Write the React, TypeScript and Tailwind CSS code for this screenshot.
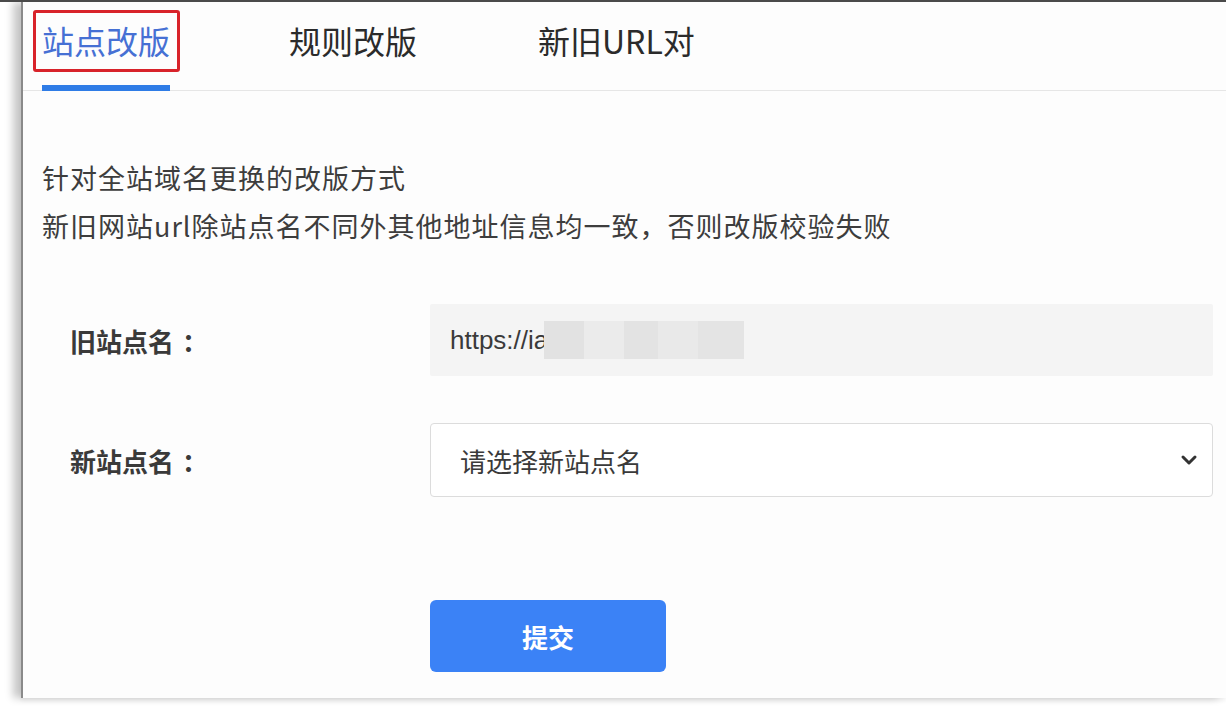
const App = () => (
  <div
    className="w-[1226px] h-[706px] bg-white overflow-hidden border-t-2 border-[#4a4a4a]"
    style={{ fontFamily: '"Noto Sans CJK SC", "Noto Sans", sans-serif' }}
  >
    <div className="ml-[21px] h-[696px] bg-[#fdfdfd] border-l-2 border-[#8a8a8a] shadow-[-8px_0_8px_rgba(0,0,0,0.22),0_3px_4px_rgba(0,0,0,0.05)]">
      {/* Tabs */}
      <div className="flex h-[89px] border-b border-[#e6e6e6] pl-[19px]">
        <div className="relative flex flex-col w-[128px]">
          <div className="absolute left-[-9px] top-[8px] w-[147px] h-[62px] border-[3px] border-[#d8232a] rounded-[3px]" />
          <span className="pt-[18px] text-[32px] leading-[40px] text-[#4670d4] whitespace-nowrap">站点改版</span>
          <div className="mt-auto h-[6px] bg-[#2f7ce6] -mb-px" />
        </div>
        <span className="ml-[119px] pt-[18px] text-[32px] leading-[40px] text-[#2b2b2b] whitespace-nowrap">规则改版</span>
        <span className="ml-[121px] pt-[18px] text-[32px] leading-[40px] text-[#2b2b2b] whitespace-nowrap">新旧URL对</span>
      </div>

      {/* Description */}
      <div className="mt-[63px] pl-[19px] text-[27px] leading-[48px] text-[#3d3d3d] tracking-[1px]">
        <p>针对全站域名更换的改版方式</p>
        <p>新旧网站url除站点名不同外其他地址信息均一致，否则改版校验失败</p>
      </div>

      {/* Form */}
      <div className="mt-[54px] flex flex-col">
        <div className="flex items-center">
          <label className="w-[407px] pl-[47px] text-[26px] font-bold text-[#3a3a3a] whitespace-nowrap">
            旧站点名<span className="ml-[8px]">：</span>
          </label>
          <div className="w-[783px] h-[72px] bg-[#f4f4f4] flex items-center pl-[20px] rounded-[2px]">
            <span className="text-[26px] text-[#3a3a3a]" style={{ fontFamily: '"Liberation Sans", Arial, sans-serif' }}>https://ia</span>
            <div className="ml-[-4px] flex h-[38px]">
              <div className="w-[40px] bg-[#e2e2e2]" />
              <div className="w-[40px] bg-[#ebebeb]" />
              <div className="w-[34px] bg-[#e3e3e3]" />
              <div className="w-[40px] bg-[#e9e9e9]" />
              <div className="w-[46px] bg-[#e4e4e4]" />
            </div>
          </div>
        </div>

        <div className="flex items-center mt-[47px]">
          <label className="w-[407px] pl-[47px] text-[26px] font-bold text-[#3a3a3a] whitespace-nowrap">
            新站点名<span className="ml-[8px]">：</span>
          </label>
          <div className="w-[783px] h-[74px] bg-white border border-[#dcdcdc] rounded-[4px] flex items-center justify-between pl-[29px] pr-[14px]">
            <span className="text-[26px] text-[#3a3a3a]">请选择新站点名</span>
            <svg width="18" height="12" viewBox="0 0 18 12">
              <polyline points="3,3 9,9 15,3" fill="none" stroke="#333" strokeWidth="3" strokeLinecap="round" strokeLinejoin="round" />
            </svg>
          </div>
        </div>

        <div className="mt-[103px] pl-[407px]">
          <button className="w-[236px] h-[72px] bg-[#3b82f6] rounded-[6px] text-white text-[26px] font-bold">提交</button>
        </div>
      </div>
    </div>
  </div>
);

export default App;
